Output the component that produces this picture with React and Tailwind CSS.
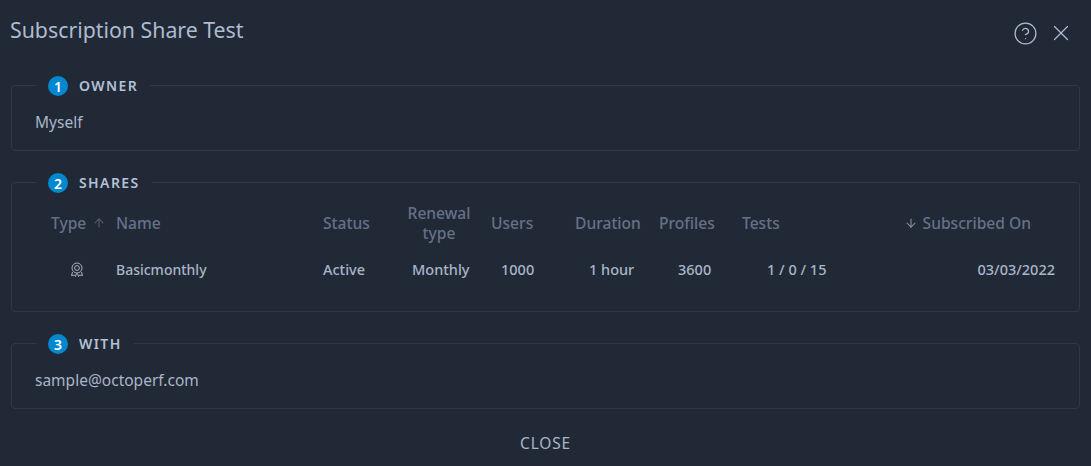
import React from 'react';
import { ArrowDown, ArrowUp, CircleHelp, X } from 'lucide-react';

function Step({ number, title, children }) {
  return (
    <fieldset className="mx-[11px] mb-[19px] rounded border border-[#2e3a48] px-6">
      <legend className="flex h-6 translate-y-px items-center gap-[11px] px-3">
        <span className="flex h-5 w-5 items-center justify-center rounded-full bg-[#0288d1] text-[14px] font-semibold text-white">{number}</span>
        <span className="-translate-y-px text-[14px] font-semibold uppercase tracking-[1.4px] text-[#b3c0d6]">{title}</span>
      </legend>
      {children}
    </fieldset>
  );
}

function MedalIcon() {
  return (
    <svg width="14" height="16" viewBox="0 0 14 16" fill="none" stroke="#a8b3c6" strokeWidth="1" className="translate-x-[-1px]">
      <circle cx="7" cy="6" r="5" />
      <circle cx="7" cy="6" r="2.4" />
      <path d="M2.5 10 L1.5 13.5 L4.5 13 L5.5 14.5 L6.5 11.5" />
      <path d="M11.5 10 L12.5 13.5 L9.5 13 L8.5 14.5 L7.5 11.5" />
    </svg>
  );
}

const head = 'text-[15.6px] font-medium leading-5 text-[#667188]';
const cell = 'mt-[17px] h-5 text-[14.5px] font-medium leading-[19px] text-[#a9b5c8]';
const plain = '-ml-px pb-[18px] pt-[15px] text-[15.5px] leading-5 text-[#a9b5c8]';

export default function App() {
  return (
    <div className="h-[466px] w-[1091px] overflow-hidden bg-[#212936] font-['Noto_Sans',sans-serif]">
      <div className="flex h-[73px] items-start justify-between pl-[10px] pr-[17px] pt-[16px]">
        <h1 className="text-[21.3px] leading-7 text-[#aebbd0]">Subscription Share Test</h1>
        <div className="flex items-center gap-[10px] pt-[4px] text-[#aebbd0]">
          <CircleHelp size={25} strokeWidth={1.2} />
          <X size={26} strokeWidth={1.1} />
        </div>
      </div>

      <Step number="1" title="Owner">
        <p className={plain}>Myself</p>
      </Step>

      <Step number="2" title="Shares">
        <div className="grid grid-cols-[80px_207px_84px_84px_84px_84px_83px_1fr] pb-[31px] pt-[9px]">
          <div className={`${head} flex items-center gap-[6px] pl-[15px]`}>
            Type <ArrowUp size={14} strokeWidth={1.8} className="text-[#566175]" />
          </div>
          <div className={`${head} flex items-center`}>Name</div>
          <div className={`${head} flex items-center`}>Status</div>
          <div className={`${head} w-16 text-center`}>Renewal type</div>
          <div className={`${head} flex items-center`}>Users</div>
          <div className={`${head} flex items-center`}>Duration</div>
          <div className={`${head} flex items-center`}>Profiles</div>
          <div className={`${head} relative flex items-center`}>Tests</div>
          <div className={`${cell} flex items-center pl-[35px]`}><MedalIcon /></div>
          <div className={`${cell} text-[14px] leading-5`}>Basicmonthly</div>
          <div className={cell}>Active</div>
          <div className={`${cell} pl-[5px]`}>Monthly</div>
          <div className={`${cell} pl-[10px]`}>1000</div>
          <div className={`${cell} pl-[14px]`}>1 hour</div>
          <div className={`${cell} pl-[19px]`}>3600</div>
          <div className={`${cell} relative flex justify-between pl-[25px]`}>
            <span>1 / 0 / 15</span>
            <span>03/03/2022</span>
            <span className={`${head} absolute right-6 top-[-47px] flex items-center gap-[5px]`}>
              <ArrowDown size={14} strokeWidth={1.8} className="text-[#8a95a8]" /> Subscribed On
            </span>
          </div>
        </div>
      </Step>

      <Step number="3" title="With">
        <p className={plain}>sample@octoperf.com</p>
      </Step>

      <div className="mt-6 flex justify-center">
        <button className="text-[15.5px] uppercase leading-5 tracking-[0.8px] text-[#a9b5c8]">Close</button>
      </div>
    </div>
  );
}
